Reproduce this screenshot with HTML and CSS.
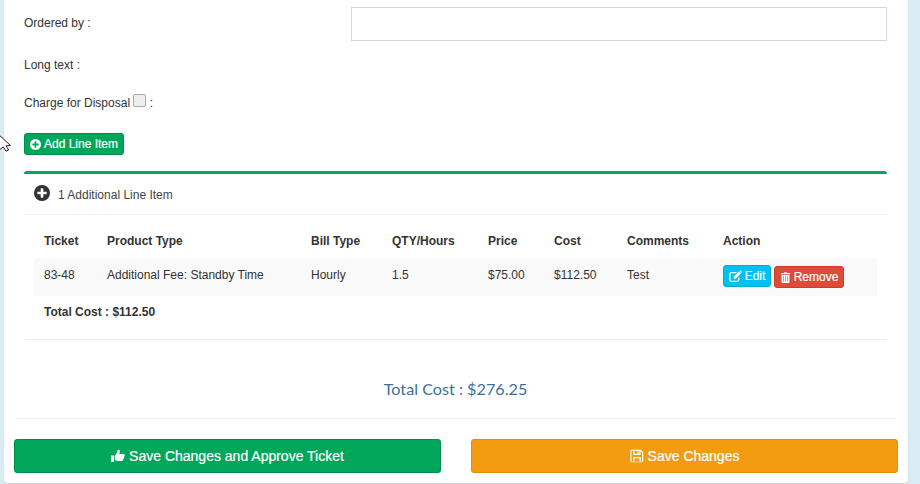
FILE: index.html
```html
<!DOCTYPE html>
<html lang="en">
<head>
<meta charset="utf-8">
<title>Ticket</title>
<link rel="stylesheet" href="styles.css">
</head>
<body>
<svg class="cursor" width="12" height="20" viewBox="0 0 12 20"><path d="M-3 1 L10.5 13.5 L6 13.8 L8.6 18 L6 19.2 L3.4 15 L-1 18 Z" fill="#fff" stroke="#222" stroke-width="1"/></svg>
<main class="card">
  <div class="form">
    <div class="field field-input">
      <label class="label">Ordered by :</label>
      <input class="text-input" type="text">
    </div>
    <div class="field field-long"><label class="label">Long text :</label></div>
    <div class="field field-check">
      <label class="label">Charge for Disposal <input class="check" type="checkbox"> :</label>
    </div>
    <button class="btn btn-add" type="button">
      <svg class="ico" viewBox="0 0 1536 1536"><path fill="currentColor" d="M1216 832v-128q0-26-19-45t-45-19h-256v-256q0-26-19-45t-45-19h-128q-26 0-45 19t-19 45v256h-256q-26 0-45 19t-19 45v128q0 26 19 45t45 19h256v256q0 26 19 45t45 19h128q26 0 45-19t19-45v-256h256q26 0 45-19t19-45zm320-64q0 209-103 385.5t-279.5 279.5-385.5 103-385.5-103-279.5-279.5-103-385.5 103-385.5 279.5-279.5 385.5-103 385.5 103 279.5 279.5 103 385.5z"/></svg>
      Add Line Item
    </button>
    <section class="panel">
      <header class="panel-head">
        <svg class="panel-ico" viewBox="0 0 1536 1536"><path fill="currentColor" d="M1216 832v-128q0-26-19-45t-45-19h-256v-256q0-26-19-45t-45-19h-128q-26 0-45 19t-19 45v256h-256q-26 0-45 19t-19 45v128q0 26 19 45t45 19h256v256q0 26 19 45t45 19h128q26 0 45-19t19-45v-256h256q26 0 45-19t19-45zm320-64q0 209-103 385.5t-279.5 279.5-385.5 103-385.5-103-279.5-279.5-103-385.5 103-385.5 279.5-279.5 385.5-103 385.5 103 279.5 279.5 103 385.5z"/></svg>
        <span class="panel-title">1 Additional Line Item</span>
      </header>
      <div class="panel-body">
        <table class="items">
          <colgroup>
            <col class="c1"><col class="c2"><col class="c3"><col class="c4"><col class="c5"><col class="c6"><col class="c7"><col class="c8">
          </colgroup>
          <thead>
            <tr><th>Ticket</th><th>Product Type</th><th>Bill Type</th><th>QTY/Hours</th><th>Price</th><th>Cost</th><th>Comments</th><th>Action</th></tr>
          </thead>
          <tbody>
            <tr>
              <td>83-48</td><td>Additional Fee: Standby Time</td><td>Hourly</td><td>1.5</td><td>$75.00</td><td>$112.50</td><td>Test</td>
              <td class="actions">
                <button class="btn btn-edit" type="button">
                  <svg class="ico-edit" viewBox="0 0 14 14"><path fill="none" stroke="currentColor" stroke-width="1.3" d="M10.500 8v2.600a1.600 1.600 0 0 1-1.600 1.600H2.600A1.600 1.600 0 0 1 1 10.600V4.400a1.600 1.600 0 0 1 1.600-1.600H8"/><path fill="currentColor" d="M5 7.300 10.600 1.700 12.800 3.900 7.200 9.500H5zM11.200 1.100 12 .5q.4-.3.8 0l1 1q.3.4 0 .8l-.7.8z"/></svg>
                  Edit
                </button>
                <button class="btn btn-remove" type="button">
                  <svg class="ico" viewBox="0 0 12 14"><path fill="currentColor" fill-rule="evenodd" d="M4 1.200 4.600.3h2.800l.6.9H11.400q.6 0 .6.6V3H0V1.800q0-.6.6-.6zM1 3.800h10v8.700q0 1.500-1.300 1.500H2.300Q1 14 1 12.500zM3 5.500v6.500h.8V5.500zM5.600 5.500v6.500h.8V5.500zM8.200 5.500v6.500h.8V5.500z"/></svg>
                  Remove
                </button>
              </td>
            </tr>
          </tbody>
        </table>
        <p class="line-total">Total Cost : $112.50</p>
      </div>
    </section>
    <p class="grand-total">Total Cost : $276.25</p>
  </div>
  <footer class="footer">
    <button class="btn btn-wide btn-approve" type="button">
      <svg class="ico-lg" viewBox="0 0 14 14"><path fill="currentColor" d="M0 6.500h3v6.500H0zM3.800 6.700 6 3.800 6.800.8q1.700-.3 2 1.200.1 1.200-.6 3h4.300q1.300.2 1.300 1.300 0 .8-.6 1.200.4 1-.4 1.600.2 1.100-.7 1.500 0 1.400-1.500 1.400H7.500q-1.800 0-3.700-.9z"/></svg>
      Save Changes and Approve Ticket
    </button>
    <button class="btn btn-wide btn-save" type="button">
      <svg class="ico-lg" viewBox="0 0 14 14"><path fill="currentColor" fill-rule="evenodd" d="M1.300.8h9.500l2.400 2.400v9q0 1-1 1H1.300q-1 0-1-1V1.800q0-1 1-1zM1.500 2v10.800h1.800V8h7.400v4.800h1.300V3.700L10.500 2v3.300q0 .7-.7.7H3.900q-.7 0-.7-.7V2zM4.400 2v2.800h5V2zM7.500 2.300h1.200v2.100H7.500zM4.500 9.200v3.600h5V9.200z"/></svg>
      Save Changes
    </button>
  </footer>
</main>
</body>
</html>
```

FILE: styles.css
```css
* { box-sizing: border-box; }

html, body {
  margin: 0;
  height: 484px;
  overflow: hidden;
}

body {
  position: relative;
  background: #d9ecf5;
  color: #333;
  font-family: "Liberation Sans", Arial, sans-serif;
  font-size: 12px;
  line-height: 17px;
  padding: 0 12px 1px 4px;
}

.cursor {
  position: absolute;
  left: 0;
  top: 132px;
}

.card {
  height: 483px;
  background: #fff;
  border-radius: 0 0 4px 4px;
  box-shadow: 0 1px 1px #c4d4dc;
  padding: 0 10px;
}

.form {
  padding: 7px 0 0 10px;
  height: 419px;
  border-bottom: 1px solid #eef0f3;
  width: 884px;
}

.field {
  display: flex;
  align-items: center;
}

.field-input { height: 34px; padding-right: 1px; margin-right: -1px; }
.field-input .label { margin-bottom: 2px; }
.field-long { height: 17px; margin-top: 16px; }
.field-check { height: 17px; margin-top: 20px; }

.label {
  display: block;
  width: 327px;
  flex: none;
}

.text-input {
  width: 536px;
  height: 34px;
  border: 1px solid #d2d6de;
  background: #fff;
}

.check {
  appearance: none;
  width: 13px;
  height: 13px;
  margin: 0;
  vertical-align: 0;
  background: #ededed;
  border: 1px solid #ababab;
  border-radius: 2px;
}

.btn {
  border: 1px solid transparent;
  border-radius: 3px;
  color: #fff;
  font-family: inherit;
  font-weight: 400;
  font-size: 12px;
  line-height: 18px;
  padding: 0;
  display: inline-flex;
  align-items: center;
  justify-content: center;
  gap: 3px;
  white-space: nowrap;
  -webkit-text-stroke: 0.2px #fff;
}

.ico { width: 11px; height: 11px; flex: none; }
.ico-edit { width: 13px; height: 13px; flex: none; }
.ico-lg { width: 14px; height: 14px; flex: none; }

.btn-add {
  margin-top: 22px;
  height: 22px;
  width: 100px;
  display: flex;
  background: #00a65a;
  border-color: #008d4c;
}

.panel {
  margin-top: 16px;
  height: 169px;
  width: 863px;
  border-top: 3px solid #00a65a;
  border-bottom: 1px solid #e8eaed;
  border-radius: 3px;
}

.panel-head {
  height: 41px;
  padding: 0 10px;
  display: flex;
  align-items: center;
  gap: 8px;
  border-bottom: 1px solid #f4f4f4;
  color: #444;
}

.panel-title { margin-top: 2px; }

.panel-ico {
  width: 16px;
  height: 16px;
  color: #333;
  margin-bottom: 3px;
}

.panel-body { padding: 10px; }

.items {
  width: 843px;
  border-collapse: collapse;
  table-layout: fixed;
}

.c1 { width: 63px; }
.c2 { width: 204px; }
.c3 { width: 81px; }
.c4 { width: 96px; }
.c5 { width: 66px; }
.c6 { width: 73px; }
.c7 { width: 96px; }
.c8 { width: 164px; }

.items th, .items td {
  text-align: left;
  padding: 0 0 0 10px;
  white-space: nowrap;
}

.items th { height: 33px; padding-bottom: 1px; }
.items td { height: 38px; background: #f9f9f9; padding-bottom: 3px; }

.actions { font-size: 0; }
.items td.actions { padding-bottom: 0; padding-top: 3px; }

.btn-edit {
  height: 22px;
  width: 48px;
  background: #00c0ef;
  border-color: #00acd6;
  margin-right: 3px;
}

.btn-remove {
  height: 22px;
  width: 70px;
  background: #dd4b39;
  border-color: #d73925;
}

.line-total {
  margin: 8px 0 0 10px;
  font-weight: 700;
}

.grand-total {
  margin: 38px 0 0;
  width: 863px;
  text-align: center;
  color: #3c6f9c;
  font-family: "Lato", sans-serif;
  font-size: 16.2px;
  line-height: 22px;
}

.footer {
  display: flex;
  gap: 30px;
  padding-top: 20px;
}

.btn-wide {
  flex: 1;
  height: 34px;
  font-size: 14px;
  line-height: 20px;
  gap: 4px;
}

.btn-approve { background: #00a65a; border-color: #008d4c; }
.btn-save { background: #f39c12; border-color: #e08e0b; }
```
